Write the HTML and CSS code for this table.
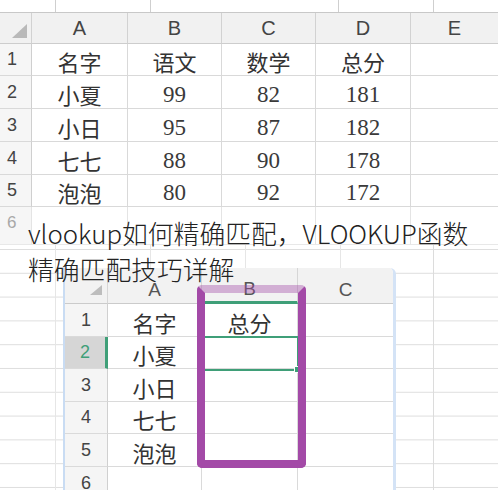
FILE: index.html
```html
<!DOCTYPE html>
<html lang="zh-CN">
<head>
<meta charset="utf-8">
<title>vlookup如何精确匹配</title>
<link rel="stylesheet" href="styles.css">
</head>
<body>
<div class="page">
  <div class="strip"></div>
  <div class="sheet">
    <div class="c h corner"><svg class="tri" width="15" height="14" viewBox="0 0 15 14"><polygon points="15,0 15,14 0,14" fill="#b9b9b9"/></svg></div>
    <div class="c h">A</div><div class="c h">B</div><div class="c h">C</div><div class="c h">D</div><div class="c h">E</div>

    <div class="c r">1</div><div class="c t">名字</div><div class="c t">语文</div><div class="c t">数学</div><div class="c t">总分</div><div class="c"></div>
    <div class="c r">2</div><div class="c t">小夏</div><div class="c n">99</div><div class="c n">82</div><div class="c n">181</div><div class="c"></div>
    <div class="c r">3</div><div class="c t">小日</div><div class="c n">95</div><div class="c n">87</div><div class="c n">182</div><div class="c"></div>
    <div class="c r">4</div><div class="c t">七七</div><div class="c n">88</div><div class="c n">90</div><div class="c n">178</div><div class="c"></div>
    <div class="c r">5</div><div class="c t">泡泡</div><div class="c n">80</div><div class="c n">92</div><div class="c n">172</div><div class="c"></div>
    <div class="c r fade">6</div><div class="c fade"></div><div class="c fade"></div><div class="c fade"></div><div class="c fade"></div><div class="c fade"></div>
  </div>

  <div class="lower">
    <div class="shot">
      <div class="mini">
        <div class="m mh mcorner"><svg class="mtri" width="12" height="10" viewBox="0 0 12 10"><polygon points="12,0 12,10 0,10" fill="#bdbdbd"/></svg></div>
        <div class="m mh">A</div><div class="m mh colsel">B</div><div class="m mh">C</div>

        <div class="m mr">1</div><div class="m mt">名字</div><div class="m mt">总分</div><div class="m"></div>
        <div class="m mr rowsel">2</div><div class="m mt">小夏</div><div class="m"></div><div class="m"></div>
        <div class="m mr">3</div><div class="m mt">小日</div><div class="m"></div><div class="m"></div>
        <div class="m mr">4</div><div class="m mt">七七</div><div class="m"></div><div class="m"></div>
        <div class="m mr">5</div><div class="m mt">泡泡</div><div class="m"></div><div class="m"></div>
        <div class="m mr">6</div><div class="m"></div><div class="m"></div><div class="m"></div>
      </div>
      <div class="selection"><span class="handle"></span></div>
      <div class="highlight"></div>
    </div>
  </div>

  <h1 class="title">vlookup如何精确匹配，VLOOKUP函数精确匹配技巧详解</h1>
</div>
</body>
</html>
```

FILE: styles.css
```css
html, body {
  margin: 0;
  padding: 0;
}
body {
  width: 498px;
  height: 490px;
  overflow: hidden;
  background-color: #ffffff;
  background-image:
    linear-gradient(#e6e6e6, #e6e6e6),
    linear-gradient(#e6e6e6, #e6e6e6),
    linear-gradient(#e6e6e6, #e6e6e6),
    linear-gradient(#e6e6e6, #e6e6e6),
    linear-gradient(#dcdcdc, #dcdcdc),
    repeating-linear-gradient(to bottom, transparent 0 22.8px, #dedede 22.8px 23.8px);
  background-size: 1px 100%, 1px 100%, 1px 100%, 1px 100%, 1px 100%, 100% 23.8px;
  background-position: 55px 0, 150px 0, 245px 0, 340px 0, 433px 0, 0 226.2px;
  background-repeat: no-repeat, no-repeat, no-repeat, no-repeat, no-repeat, repeat;
}
.page {
  position: relative;
  width: 498px;
  height: 490px;
}

/* top strip above the sheet */
.strip {
  height: 12px;
  background-color: #fff;
  background-image:
    linear-gradient(#cfcfcf, #cfcfcf),
    linear-gradient(#cfcfcf, #cfcfcf),
    linear-gradient(#cfcfcf, #cfcfcf),
    linear-gradient(#cfcfcf, #cfcfcf);
  background-size: 1px 100%;
  background-repeat: no-repeat;
  background-position: 55px 0, 150px 0, 338px 0, 433px 0;
}

/* main sheet */
.sheet {
  display: grid;
  grid-template-columns: 32px 96px 94px 94px 95px 87px;
  grid-template-rows: 31px 32px 33px 33px 33px 32px 38px;
  border-top: 1px solid #c8c8c8;
  background: #fff;
}
.c {
  box-sizing: border-box;
  border-right: 1px solid #d9d9d9;
  border-bottom: 1px solid #d9d9d9;
  display: flex;
  align-items: center;
  justify-content: center;
  color: #333;
}
.c:nth-child(6n) {
  border-right: none;
}
.h {
  background: #f1f1f1;
  border-right-color: #d2d2d2;
  border-bottom-color: #cdcdcd;
  font-family: "Liberation Sans", Arial, sans-serif;
  font-size: 20px;
  color: #444;
}
.corner {
  position: relative;
}
.tri {
  position: absolute;
  right: 4px;
  bottom: 5px;
}
.r {
  background: #f6f6f6;
  border-right-color: #cfcfcf;
  justify-content: flex-start;
  padding-left: 7px;
  font-family: "Liberation Sans", Arial, sans-serif;
  font-size: 18px;
  color: #444;
}
.t {
  font-family: "Noto Sans CJK SC", sans-serif;
  font-size: 22px;
  padding-top: 3px;
  color: #333;
}
.n {
  font-family: "Liberation Serif", "Times New Roman", serif;
  font-size: 23px;
  padding-top: 5px;
  color: #3a3a3a;
}
.fade {
  border-right-color: #e4e4e4;
  border-bottom-color: #e8e8e8;
}
.r.fade {
  color: #a8a8a8;
  align-items: flex-start;
  padding-top: 6px;
  font-size: 17px;
}

/* lower screenshot */
.lower {
  padding: 23px 0 0 63px;
}
.shot {
  position: relative;
  box-sizing: border-box;
  width: 333px;
  height: 222px;
  border-left: 2px solid #c9dcf3;
  border-right: 3px solid #d4e3f6;
  border-top-right-radius: 6px;
  overflow: hidden;
  background: #fff;
}
.mini {
  display: grid;
  grid-template-columns: 43px 94px 96px 95px;
  grid-template-rows: 36px 33px 32px 33px 32px 33px 33px;
}
.m {
  box-sizing: border-box;
  border-right: 1px solid #dadada;
  border-bottom: 1px solid #dadada;
  display: flex;
  align-items: center;
  justify-content: center;
  color: #333;
}
.m:nth-child(4n) {
  border-right: none;
}
.mh {
  background: #f2f2f2;
  border-bottom-color: #cbcbcb;
  border-right-color: #d6d6d6;
  font-family: "Liberation Sans", Arial, sans-serif;
  font-size: 19px;
  color: #555;
  padding-top: 8px;
}
.mcorner {
  position: relative;
}
.mtri {
  position: absolute;
  right: 5px;
  bottom: 8px;
}
.colsel {
  border-bottom: 3px solid #3f9f78;
}
.mr {
  background: #f5f5f5;
  border-right-color: #d0d0d0;
  font-family: "Liberation Sans", Arial, sans-serif;
  font-size: 18px;
  color: #444;
}
.rowsel {
  background: #d6d6d6;
  color: #3f9f78;
  border-right: 3px solid #3f9f78;
}
.mt {
  font-family: "Noto Sans CJK SC", sans-serif;
  font-size: 22px;
  padding-top: 3px;
  color: #333;
}
.selection {
  position: absolute;
  left: 136px;
  top: 68px;
  width: 98px;
  height: 35px;
  box-sizing: border-box;
  border: 2px solid #3f9f78;
}
.handle {
  position: absolute;
  right: -4px;
  bottom: -4px;
  width: 5px;
  height: 5px;
  background: #3f9f78;
  border: 1px solid #fff;
}
.highlight {
  position: absolute;
  left: 132px;
  top: 17px;
  width: 109px;
  height: 183px;
  box-sizing: border-box;
  border: 8px solid #a34aa7;
  border-top-color: rgba(163, 74, 167, 0.4);
  border-radius: 5px;
}

/* overlaid title */
.title {
  position: absolute;
  left: 28px;
  top: 215px;
  width: 455px;
  margin: 0;
  font-family: "Noto Sans CJK SC", sans-serif;
  font-size: 25.8px;
  font-weight: 300;
  line-height: 36px;
  color: #222;
}
```
